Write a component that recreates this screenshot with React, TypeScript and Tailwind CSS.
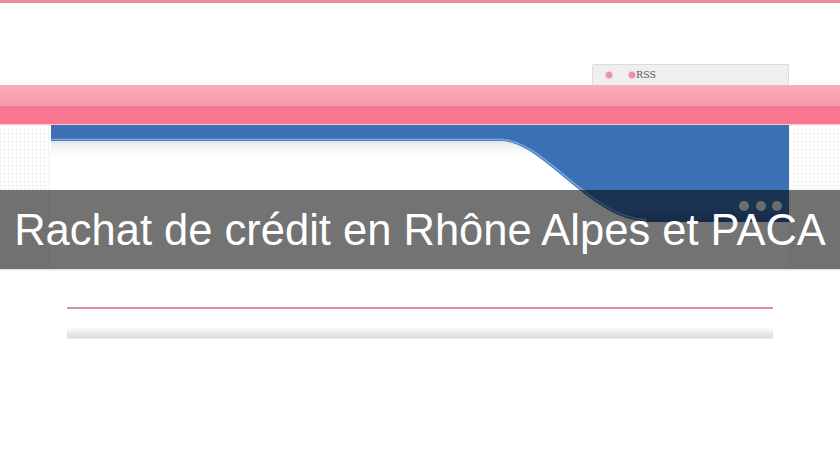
export default function App() {
  return (
    <div className="relative w-[840px] h-[460px] overflow-hidden bg-white font-['Liberation_Sans',Arial,sans-serif]">
      {/* top rule */}
      <div className="h-[3px] bg-[#ea8d9c]" />

      {/* header with rss tab */}
      <div className="h-[82px] flex items-end justify-end pr-[51px]">
        <div className="w-[197px] h-[21px] flex items-center bg-[#efefef] border border-b-0 border-[#dcdcdc] rounded-t-[2px] pl-[13px]">
          <span className="w-[6px] h-[6px] rounded-full bg-[#ec8fa3] ring-1 ring-[#f6c3cf]" />
          <span className="ml-[17px] w-[6px] h-[6px] rounded-full bg-[#ec8fa3] ring-1 ring-[#f6c3cf]" />
          <span className="ml-[1px] text-[9.5px] leading-none text-[#555] font-['DejaVu_Serif',serif]">RSS</span>
        </div>
      </div>

      {/* pink nav band */}
      <div className="h-[40px] flex flex-col">
        <div className="h-[21px] bg-[linear-gradient(#f9aeb9,#f79aaa)]" />
        <div className="flex-1 bg-[#f8778f]" />
        <div className="h-px bg-[#fbc6d0]" />
      </div>

      {/* banner row */}
      <div className="flex h-[144px]">
        <div className="w-[51px] bg-[linear-gradient(#f4f4f4_1px,transparent_1px),linear-gradient(90deg,#f4f4f4_1px,transparent_1px)] bg-[size:4px_4px]" />
        <div className="w-[738px]">
          <svg width="738" height="97" viewBox="0 0 738 97" className="block">
            <defs>
              <linearGradient id="wh" x1="0" y1="16" x2="0" y2="30" gradientUnits="userSpaceOnUse">
                <stop offset="0" stopColor="#e3e7ee" />
                <stop offset="1" stopColor="#ffffff" />
              </linearGradient>
              <linearGradient id="bl" x1="0" y1="0" x2="0" y2="97" gradientUnits="userSpaceOnUse">
                <stop offset="0" stopColor="#3b71b4" />
                <stop offset="0.85" stopColor="#3b71b4" />
                <stop offset="1" stopColor="#2f5f9c" />
              </linearGradient>
            </defs>
            <rect width="738" height="97" fill="url(#bl)" />
            <path d="M0 16 H450 C492 16 540 96 595 96 V97 H0 Z" fill="url(#wh)" />
            <path d="M0 14.5 H450 C493 14.5 541 94.5 596 94.5" fill="none" stroke="#7ea8da" strokeWidth="1.5" />
            <circle cx="693" cy="81" r="5" fill="#eef0f3" />
            <circle cx="710" cy="81" r="5" fill="#eef0f3" />
            <circle cx="726" cy="81" r="5" fill="#eef0f3" />
          </svg>
        </div>
        <div className="w-[51px] bg-[linear-gradient(#f4f4f4_1px,transparent_1px),linear-gradient(90deg,#f4f4f4_1px,transparent_1px)] bg-[size:4px_4px]" />
      </div>

      {/* content rules */}
      <div className="mt-[38px] mx-[67px] h-[2px] bg-[#d690a2]" />
      <div className="mt-[19px] mx-[67px] h-[11px] bg-[linear-gradient(#fbfbfb,#dadada)] border-b border-[#f0f0f0]" />

      {/* title overlay */}
      <div className="absolute left-0 right-0 top-[190px] h-[79px] pt-[2px] bg-black/55 shadow-[0_1px_2px_rgba(0,0,0,0.15)] text-center text-white text-[43.5px] leading-[77px] whitespace-nowrap">
        Rachat de crédit en Rhône Alpes et PACA
      </div>
    </div>
  );
}
